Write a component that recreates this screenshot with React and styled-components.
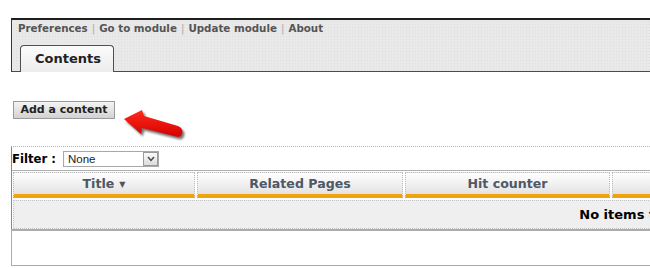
import React from "react";
import styled, { createGlobalStyle } from "styled-components";

const Global = createGlobalStyle`
  html, body { margin: 0; padding: 0; overflow: hidden; background: #fff; }
  body { font-family: "DejaVu Sans", Verdana, sans-serif; }
`;

const dots = `
  background-color: #e9e9e9;
  background-image: radial-gradient(#dedede 0.6px, transparent 0.8px);
  background-size: 3px 3px;
`;

const Page = styled.div`
  width: 1400px;
  padding-top: 18px;
`;

const TopPanel = styled.div`
  margin-left: 11px;
  height: 51px;
  border-top: 2px solid #1e1e1e;
  border-left: 1px solid #3a3a3a;
  border-bottom: 1px solid #4a4a4a;
  ${dots}
  display: flex;
  flex-direction: column;
`;

const LinkBar = styled.div`
  display: flex;
  align-items: center;
  gap: 4px;
  padding: 1px 0 0 6px;
  height: 14px;
  font-size: 10.3px;
  line-height: 14px;
`;

const Link = styled.a`
  color: #555;
  font-weight: bold;
  text-decoration: none;
`;

const Sep = styled.span`
  color: #aaa;
  font-weight: normal;
`;

const Tabs = styled.div`
  margin-top: auto;
  display: flex;
  padding-left: 8px;
`;

const Tab = styled.div`
  width: 94px;
  height: 27px;
  margin-bottom: -1px;
  box-sizing: border-box;
  border: 1px solid #505050;
  border-bottom: none;
  border-radius: 4px 4px 0 0;
  background: linear-gradient(#fbfbfb, #ececec);
  font-size: 13px;
  font-weight: bold;
  color: #222;
  line-height: 26px;
  padding-left: 14px;
`;

const ActionRow = styled.div`
  display: flex;
  align-items: flex-start;
  margin-top: 29px;
  margin-left: 13px;
  height: 45px;
`;

const Button = styled.button`
  width: 102px;
  height: 18px;
  padding: 0;
  box-sizing: border-box;
  border: 1px solid #9a9a9a;
  background: linear-gradient(#f4f4f4, #d2d2d2);
  font-family: "DejaVu Sans", Verdana, sans-serif;
  font-size: 11px;
  font-weight: bold;
  color: #222;
  line-height: 16px;
`;

const ArrowSvg = styled.svg`
  margin-left: 5px;
  margin-top: 5px;
`;

const ListBox = styled.div`
  margin-left: 11px;
  border-top: 1px dotted #b5b5b5;
  border-left: 1px solid #8a8a8a;
`;

const FilterRow = styled.div`
  display: flex;
  align-items: center;
  height: 23px;
`;

const FilterLabel = styled.span`
  font-size: 11.7px;
  font-weight: bold;
  color: #000;
  width: 51px;
`;

const Select = styled.div`
  width: 96px;
  height: 16px;
  box-sizing: border-box;
  border: 1px solid #a8a8a8;
  display: flex;
  align-items: center;
  background: #fff;
  color: #222;
`;

const SelectText = styled.span`
  flex: 1;
  padding-left: 4px;
  line-height: 14px;
  font-family: "Liberation Sans", Arial, sans-serif;
  font-size: 11.5px;
`;

const SelectBtn = styled.span`
  width: 15px;
  height: 14px;
  box-sizing: border-box;
  border: 1px solid #9a9a9a;
  background: linear-gradient(#fafafa, #dcdcdc);
  display: flex;
  align-items: center;
  justify-content: center;
`;

const Table = styled.div`
  border-top: 1px solid #b0b0b0;
  width: 1274px;
  padding: 0 0 0 1px;
`;

const HeadRow = styled.div`
  display: flex;
  gap: 2px;
  padding-top: 1px;
`;

const HeadCell = styled.div`
  width: ${(p) => p.$w}px;
  height: 26px;
  box-sizing: border-box;
  border: 1px dotted #bdbdbd;
  border-bottom: 4px solid #f0a30a;
  background: linear-gradient(#ffffff, #e3e3e3);
  font-size: 12.6px;
  font-weight: bold;
  color: #4e5866;
  text-align: center;
  line-height: 21px;
`;

const SortMark = styled.span`
  font-size: 8px;
  margin-left: 5px;
  vertical-align: 1px;
  color: #555;
`;

const EmptyRow = styled.div`
  margin-top: 2px;
  height: 29px;
  box-sizing: border-box;
  border: 1px dotted #c4c4c4;
  background: #efefef;
  font-size: 13px;
  font-weight: bold;
  color: #000;
  text-align: center;
  line-height: 27px;
`;

const Footer = styled.div`
  margin-left: 11px;
  height: 34px;
  border-top: 2px solid #ababab;
  border-left: 1px solid #ababab;
  border-bottom: 1px solid #ababab;
`;

function Arrow() {
  const d =
    "M4,13 L22,4 L24,10 L58,20 Q65,23 61,30 L58,31 L22,22 L21,28 Z";
  return (
    <ArrowSvg width="70" height="36" viewBox="0 0 70 36">
      <defs>
        <filter id="sh" x="-20%" y="-20%" width="140%" height="160%">
          <feGaussianBlur stdDeviation="1.2" />
        </filter>
        <linearGradient id="rg" x1="0" y1="0" x2="0" y2="1">
          <stop offset="0" stopColor="#ff2a1a" />
          <stop offset="1" stopColor="#d40000" />
        </linearGradient>
      </defs>
      <path d={d} fill="rgba(0,0,0,0.55)" transform="translate(2,2.5)" filter="url(#sh)" />
      <path d={d} fill="url(#rg)" />
    </ArrowSvg>
  );
}

export default function App() {
  const cols = [
    { w: 182, t: "Title", sort: true },
    { w: 206, t: "Related Pages" },
    { w: 205, t: "Hit counter" },
    { w: 205, t: "" },
    { w: 205, t: "" },
    { w: 257, t: "" },
  ];
  return (
    <Page>
      <Global />
      <TopPanel>
        <LinkBar>
          <Link href="#">Preferences</Link>
          <Sep>|</Sep>
          <Link href="#">Go to module</Link>
          <Sep>|</Sep>
          <Link href="#">Update module</Link>
          <Sep>|</Sep>
          <Link href="#">About</Link>
        </LinkBar>
        <Tabs>
          <Tab>Contents</Tab>
        </Tabs>
      </TopPanel>
      <ActionRow>
        <Button>Add a content</Button>
        <Arrow />
      </ActionRow>
      <ListBox>
        <FilterRow>
          <FilterLabel>Filter :</FilterLabel>
          <Select>
            <SelectText>None</SelectText>
            <SelectBtn>
              <svg width="8" height="6" viewBox="0 0 8 6">
                <path d="M1,1 L4,4.5 L7,1" fill="none" stroke="#444" strokeWidth="1.4" />
              </svg>
            </SelectBtn>
          </Select>
        </FilterRow>
        <Table>
          <HeadRow>
            {cols.map((c, i) => (
              <HeadCell key={i} $w={c.w}>
                {c.t}
                {c.sort && <SortMark>▼</SortMark>}
              </HeadCell>
            ))}
          </HeadRow>
          <EmptyRow>No items to display</EmptyRow>
        </Table>
      </ListBox>
      <Footer />
    </Page>
  );
}
